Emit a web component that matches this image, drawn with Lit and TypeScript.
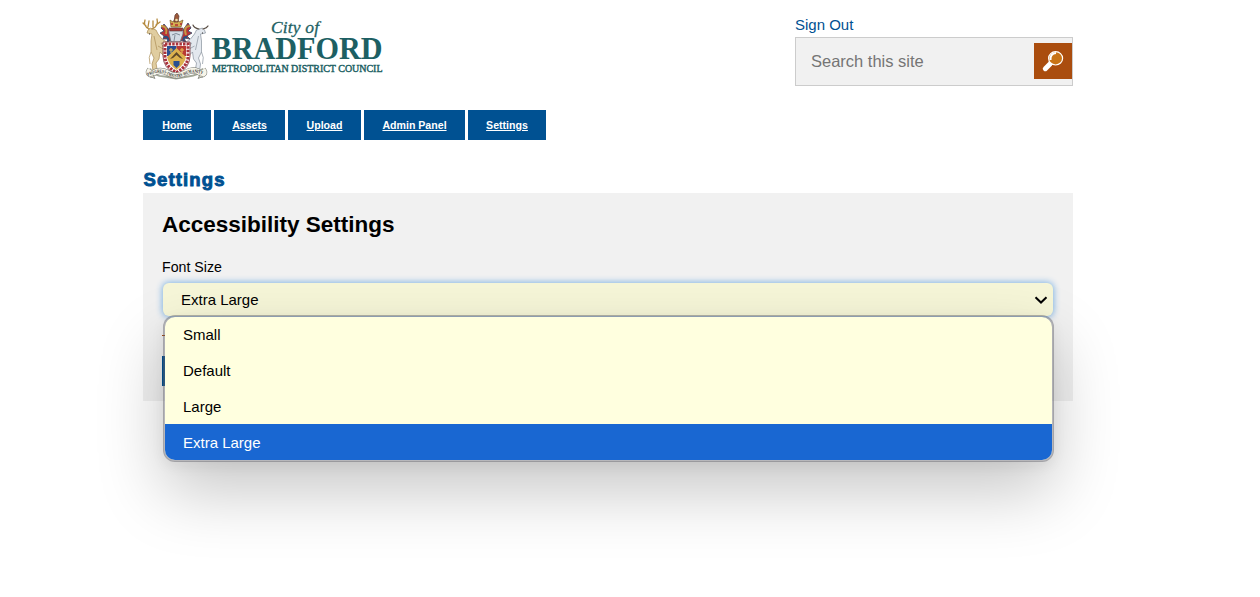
import { LitElement, html, css, svg } from "lit";
import { customElement, property } from "lit/decorators.js";

@customElement("council-logo")
class CouncilLogo extends LitElement {
  static styles = css`
    :host { display: block; width: 250px; height: 80px; }
    svg { display: block; overflow: visible; }
    .serif { font-family: "Liberation Serif", serif; fill: #1d5f63; stroke: #1d5f63; }
    .bold { font-weight: bold; stroke: none; }
    .motto { font: bold 4.6px "Liberation Serif", serif; fill: #333; }
  `;
  render() {
    const supporter = (flip: boolean) => svg`
      <g transform=${flip ? "translate(76.5 0) scale(-1 1)" : ""}
        fill=${flip ? "#e3e8ee" : "#e0cda0"} stroke=${flip ? "#87919c" : "#ab8d55"} stroke-width=".7" stroke-linejoin="round">
        <path d="M12 20 L18 22 L20 26 L24 31 L30 35 L29 37 L23 35 L27 42 L29 47 L27 49 L22 44 L21 51 L18 55 L19 61 L15 63 L14 56 L16 50 L13 44 L13 33 L14 26 L9 25 L10 22 Z"/>
        <path d="M13 44 Q10 49 12 56 M20 38 L29 43 M16 28 L19 42" fill="none"/>
      </g>`;
    return html`
      <svg width="250" height="80" viewBox="0 0 250 80" aria-label="City of Bradford Metropolitan District Council">
        ${supporter(false)}${supporter(true)}
        <g fill="none" stroke="#b4893d" stroke-width="1.3" stroke-linecap="round">
          <path d="M11 21 Q5 18 7 12 M8 18 L5 15 M14 21 Q21 18 19 11 M18 17 L22 14 M10 19 L11 13 M15 19 L15 13"/>
        </g>
        <path d="M65 21 Q69 20 70 18 M61 21 Q56 20 55 17" fill="none" stroke="#594d43" stroke-width="1.2" stroke-linecap="round"/>
        <path d="M11 26 h1 M64 25 h1" stroke="#333" stroke-width="1"/>
        <g stroke-linejoin="round">
          <path d="M31 22 L26 16 L23 20 L26 23 L22 25 L26 28 L25 31 L31 31 L29 34 L34 32 Z" fill="#b83236" stroke="#304665" stroke-width=".8"/>
          <path d="M45 22 L50 15 L53 20 L50 23 L54 25 L49 28 L52 31 L46 30 L48 34 L42 32 Z" fill="#b83236" stroke="#304665" stroke-width=".8"/>
          <path d="M23 18 Q30 18 28 26 M52 18 Q45 18 48 27" fill="none" stroke="#c39945" stroke-width="2"/>
          <path d="M26 29 Q31 28 30 33 M49 29 Q44 29 46 33" fill="none" stroke="#294e80" stroke-width="2"/>
          <path d="M31 25 Q30 20 38 20 Q46 20 45 26 L42 34 L33 34 Z" fill="#d3dbe4" stroke="#657282" stroke-width=".8"/>
          <path d="M34 27 Q38 24 42 27 M37 27 L36 33" stroke="#6a7785" stroke-width=".8" fill="none"/>
          <path d="M31 20 H45 L44 23 H32 Z" fill="#a93637" stroke="#533b35" stroke-width=".6"/>
          <path d="M33 19 L32 12 L35 14 L38 9 L41 14 L45 12 L43 19 Z" fill="#d5ad50" stroke="#77572b" stroke-width=".7"/>
          <path d="M36 14 L37 7 L39 5 L41 8 L40 14 Z" fill="#9d593a" stroke="#5c3930" stroke-width=".7"/>
          <path d="M33 16 h2 m2 1 h3 m2 -1 h2" stroke="#b12d32" stroke-width="1.6"/>
          <circle cx="38.5" cy="12" r="1.3" fill="#eee0aa"/>
        </g>
        <path d="M25 34 H52 V48 Q52 60 38.5 67 Q25 60 25 48 Z" fill="#fff" stroke="#722c31" stroke-width=".8"/>
        <path d="M27 36 H50 V48 Q50 58 38.5 64.5 Q27 58 27 48 Z" fill="none" stroke="#a9323b" stroke-width="3" stroke-dasharray="2.5 1.1"/>
        <path d="M29 38 H38.5 V48 H29 Z" fill="#294f91"/><path d="M38.5 38 H48 V48 H38.5 Z" fill="#b83a34"/>
        <path d="M29 49 L38.5 40 L48 49 Q47 56 38.5 62 Q30 56 29 49 Z" fill="#ddb14e"/>
        <path d="M32 51 L38.5 44 L45 51 L42 50 L38.5 47 L35 50 Z" fill="#604829"/>
        <path d="M35.5 53 H41.5 V57 L38.5 60 L35.5 57 Z" fill="#294f91"/>
        <path d="M33 40 v5 M31 42 h4 M44 40 v5 M42 42 h4" stroke="#e6bd56" stroke-width="1.1"/>
        <g transform="translate(0 1.5)">
          <path d="M12 59 Q15 67 27 67 L38 69 L50 67 Q61 66 65 59" fill="none" stroke="#a3a798" stroke-width="2"/>
          <path d="M12 60 Q9 64 13 65 Q21 59 29 63 Q38 69 48 63 Q57 58 64 65 Q68 64 65 60" fill="none" stroke="#73766f" stroke-width="6" stroke-linejoin="round"/>
          <path d="M12 60 Q9 64 13 65 Q21 59 29 63 Q38 69 48 63 Q57 58 64 65 Q68 64 65 60" fill="none" stroke="#f7f5e9" stroke-width="5" stroke-linejoin="round"/>
          <path id="mottoLine" d="M10 66.5 Q21 60.5 29 65 Q38 70.5 48 65 Q57 60.5 68 66.5" fill="none"/>
          <text class="motto" textLength="57" lengthAdjust="spacingAndGlyphs"><textPath href="#mottoLine">PROGRESS·INDUSTRY·HUMANITY</textPath></text>
          <path d="M12 67 L17 69 L15 65 M65 67 L60 69 L62 65" fill="#d0cdbd" stroke="#767970" stroke-width=".7"/>
        </g>
        <text class="serif" x="133" y="25" font-size="17.5" font-style="italic" stroke-width=".3" textLength="48" lengthAdjust="spacing">City of</text>
        <text class="serif bold" x="73.5" y="51" font-size="31.5" textLength="171" lengthAdjust="spacingAndGlyphs">BRADFORD</text>
        <text class="serif" x="74" y="64" font-size="10.4" stroke-width=".45" textLength="170.5" lengthAdjust="spacingAndGlyphs">METROPOLITAN DISTRICT COUNCIL</text>
      </svg>`;
  }
}

@customElement("font-size-select")
class FontSizeSelect extends LitElement {
  @property() value = "Extra Large";
  options = ["Small", "Default", "Large", "Extra Large"];
  static styles = css`
    :host { display: block; position: relative; height: 33px; font-size: 15px; }
    .control {
      box-sizing: border-box; height: 33px; margin: 0 1px; padding: 0 4px 0 18px;
      display: flex; align-items: center; justify-content: space-between;
      background: #f6f6d8; border-radius: 6px; box-shadow: 0 0 6px 1px #84b6e4;
    }
    .chevron { display: block; }
    .menu {
      position: absolute; left: 1px; right: 0; top: 32px; box-sizing: border-box; height: 147px;
      border: 2px solid rgba(95, 95, 105, .45); border-radius: 12px; background-clip: padding-box;
      background-color: #ffffdf; overflow: hidden;
      box-shadow: 0 4px 14px rgba(0, 0, 0, .06), 0 30px 66px rgba(0, 0, 0, .22);
    }
    .option { height: 36px; line-height: 38px; padding-left: 18px; }
    .option:first-child { height: 35px; line-height: 36px; }
    .selected { background: #1967d2; color: #fff; }
  `;
  render() {
    return html`
      <div class="control"><span>${this.value}</span>
        <svg class="chevron" width="16" height="16" viewBox="0 0 16 16"><path d="M2.5 5.2 L8 10.5 L13.5 5.2" fill="none" stroke="#000" stroke-width="2"/></svg>
      </div>
      <div class="menu">${this.options.map((o) => html`<div class="option ${o === this.value ? "selected" : ""}">${o}</div>`)}</div>`;
  }
}

@customElement("app-root")
class AppRoot extends LitElement {
  static styles = css`
    :host { display: block; box-sizing: border-box; height: 597px; overflow: hidden; background: #fff; color: #000; font-family: "Liberation Sans", Arial, sans-serif; }
    .page { width: 930px; margin-left: 143px; }
    header { display: flex; justify-content: space-between; height: 110px; box-sizing: border-box; padding-top: 8px; }
    council-logo { margin-left: -5px; }
    .tools { width: 278px; padding-top: 8px; }
    .signout { display: block; font-size: 15px; line-height: 18px; height: 21px; color: #005192; text-decoration: none; }
    .search { box-sizing: border-box; height: 49px; border: 1px solid #ccc; background: #f1f1f1; display: flex; justify-content: space-between; align-items: center; padding-left: 15px; color: #757575; font-size: 16.5px; }
    .go { width: 38px; height: 36px; background: #aa4d0e; margin-bottom: 2px; }
    .go svg { display: block; }
    nav { display: grid; grid-template-columns: 68px 71px 73px 101px 78px; gap: 3px; height: 30px; }
    nav a { background: #005192; color: #fff; font-size: 10.6px; font-weight: bold; line-height: 30px; text-align: center; text-decoration: underline; }
    h1 { margin: 29px 0 0; height: 24px; line-height: 22px; font-size: 18.5px; color: #005192; letter-spacing: 1.15px; -webkit-text-stroke: .9px #005192; text-indent: .5px; }
    .panel { box-sizing: border-box; height: 208px; background: #f1f1f1; padding: 18px 19px 0; }
    h2 { margin: 0; font-size: 22.5px; line-height: 28px; }
    .label { display: block; margin-top: 19px; font-size: 14.2px; line-height: 18px; height: 25px; }
    .help { width: 12px; height: 20px; margin-top: 19px; border-top: 1px solid #a84b10; }
    .save { width: 90px; height: 30px; background: #005192; }
  `;
  render() {
    const links = ["Home", "Assets", "Upload", "Admin Panel", "Settings"];
    return html`
      <div class="page">
        <header>
          <council-logo></council-logo>
          <div class="tools">
            <a class="signout">Sign Out</a>
            <div class="search"><span>Search this site</span>
              <div class="go"><svg width="38" height="36" viewBox="0 0 38 36">
                <path d="M11.3 25.7 L16 21" stroke="#fff" stroke-width="5" stroke-linecap="round"/>
                <path d="M15 19 L18 16 M17 22 L20 19" stroke="#fff" stroke-width="1.5"/>
                <ellipse cx="21.6" cy="15.3" rx="7" ry="6.7" fill="#c97416" stroke="#fff" stroke-width="1.2"/>
                <path d="M16.5 17 Q16 10.5 22 10" fill="none" stroke="#fff" stroke-width="2"/>
              </svg></div>
            </div>
          </div>
        </header>
        <nav>${links.map((l) => html`<a>${l}</a>`)}</nav>
        <h1>Settings</h1>
        <section class="panel">
          <h2>Accessibility Settings</h2>
          <span class="label">Font Size</span>
          <font-size-select></font-size-select>
          <div class="help"></div>
          <div class="save"></div>
        </section>
      </div>`;
  }
}
